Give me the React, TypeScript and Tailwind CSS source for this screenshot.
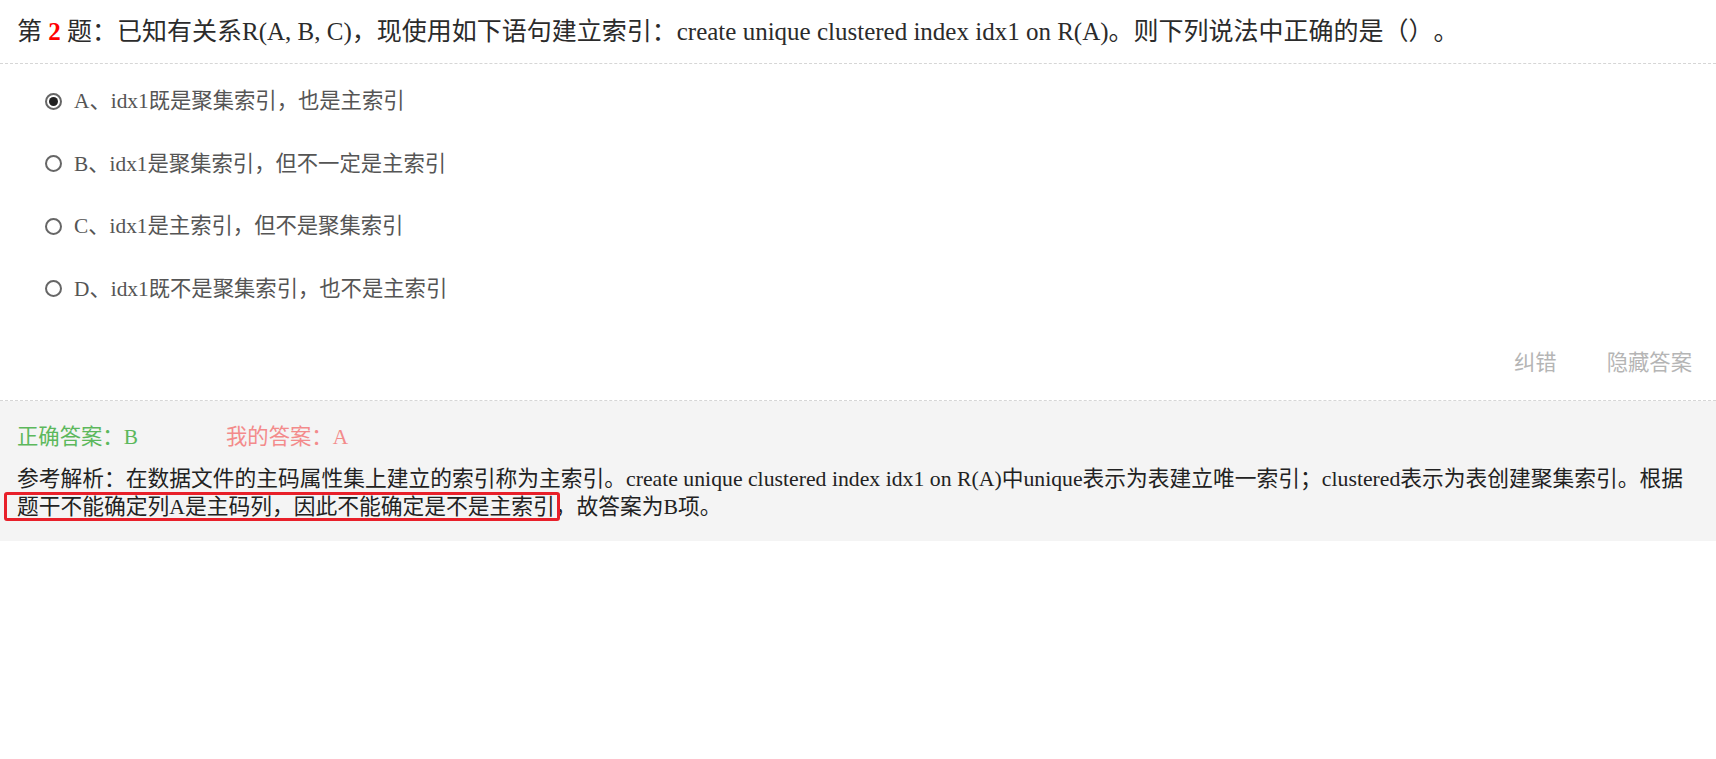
const options = [
  { key: "A", text: "idx1既是聚集索引，也是主索引", checked: true },
  { key: "B", text: "idx1是聚集索引，但不一定是主索引", checked: false },
  { key: "C", text: "idx1是主索引，但不是聚集索引", checked: false },
  { key: "D", text: "idx1既不是聚集索引，也不是主索引", checked: false },
];

const Radio = ({ checked }: { checked: boolean }) => (
  <span className="w-[17px] h-[17px] rounded-full border-2 border-[#666] bg-white flex items-center justify-center shrink-0">
    {checked && <span className="w-[9px] h-[9px] rounded-full bg-[#222]" />}
  </span>
);

const App = () => {
  return (
    <div className="w-[1716px] font-['Liberation_Serif','Noto_Sans_CJK_SC',serif] bg-white [text-spacing-trim:space-all]">
      {/* question title */}
      <div className="h-[64px] px-[17px] flex items-center border-b border-dashed border-[#d6d6d6] text-[25px] text-[#2b2b2b] leading-[28px]">
        <span>
          第 <b className="text-[#ff0000]">2</b> 题：已知有关系R(A, B, C)，现使用如下语句建立索引：create unique clustered index idx1 on R(A)。则下列说法中正确的是（）。
        </span>
      </div>

      {/* options */}
      <div className="pt-[6px] pl-[45px]">
        {options.map((o) => (
          <div key={o.key} className="h-[62.5px] flex items-center gap-[12px] text-[21.33px] text-[#555] leading-[26px]">
            <Radio checked={o.checked} />
            <span>
              {o.key}、{o.text}
            </span>
          </div>
        ))}
      </div>

      {/* actions */}
      <div className="h-[81px] pt-[8px] pr-[24px] flex items-center justify-end gap-[50px] border-b border-dashed border-[#d6d6d6] text-[21.33px] text-[#b5b5b5]">
        <span>纠错</span>
        <span>隐藏答案</span>
      </div>

      {/* answer panel */}
      <div className="relative bg-[#f4f4f4] px-[17px] pt-[22px] pb-[20px] text-[21.33px] leading-[28px]">
        <div className="flex">
          <span className="w-[209px] text-[#5cb85c]">正确答案：B</span>
          <span className="text-[#f38b8b]">我的答案：A</span>
        </div>
        <p className="mt-[14px] text-[21.75px] text-[#222]">
          参考解析：在数据文件的主码属性集上建立的索引称为主索引。create unique clustered index idx1 on R(A)中unique表示为表建立唯一索引；clustered表示为表创建聚集索引。根据题干不能确定列A是主码列，因此不能确定是不是主索引，故答案为B项。
        </p>
        {/* highlight drawn over the screenshot */}
        <div className="absolute left-[4px] top-[91px] w-[556px] h-[29px] border-[3px] border-[#e8202a] rounded-[3px] pointer-events-none" />
      </div>
    </div>
  );
};

export default App;
